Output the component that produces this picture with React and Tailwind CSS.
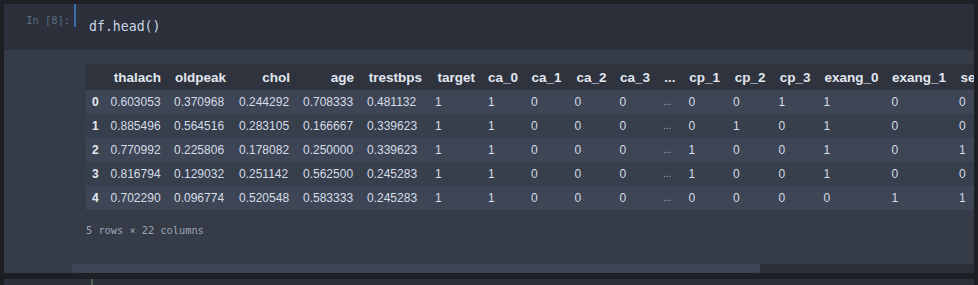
import React from 'react'

const columns = [
  { name: 'thalach', w: 'w-[63.5px] min-w-[63.5px]' },
  { name: 'oldpeak', w: 'w-[65px] min-w-[65px]' },
  { name: 'chol', w: 'w-[64px] min-w-[64px]' },
  { name: 'age', w: 'w-[64px] min-w-[64px]' },
  { name: 'trestbps', w: 'w-[68px] min-w-[68px]' },
  { name: 'target', w: 'w-[53px] min-w-[53px]' },
  { name: 'ca_0', w: 'w-[43px] min-w-[43px]' },
  { name: 'ca_1', w: 'w-[43.5px] min-w-[43.5px]' },
  { name: 'ca_2', w: 'w-[45px] min-w-[45px]' },
  { name: 'ca_3', w: 'w-[43.5px] min-w-[43.5px]' },
  { name: '...', w: 'w-[25.5px] min-w-[25.5px]', dots: true },
  { name: 'cp_1', w: 'w-[44.5px] min-w-[44.5px]' },
  { name: 'cp_2', w: 'w-[45.5px] min-w-[45.5px]' },
  { name: 'cp_3', w: 'w-[45px] min-w-[45px]' },
  { name: 'exang_0', w: 'w-[68px] min-w-[68px]' },
  { name: 'exang_1', w: 'w-[67.5px] min-w-[67.5px]' },
  { name: 'sex_0', w: 'w-[52px] min-w-[52px]' },
  { name: 'sex_1', w: 'w-[52px] min-w-[52px]' },
  { name: 'slope_0', w: 'w-[62px] min-w-[62px]' },
  { name: 'slope_1', w: 'w-[62px] min-w-[62px]' },
  { name: 'slope_2', w: 'w-[62px] min-w-[62px]' },
]

const rows = [
  ['0.603053', '0.370968', '0.244292', '0.708333', '0.481132', '1', '1', '0', '0', '0', '...', '0', '0', '1', '1', '0', '0', '1', '0', '0', '1'],
  ['0.885496', '0.564516', '0.283105', '0.166667', '0.339623', '1', '1', '0', '0', '0', '...', '0', '1', '0', '1', '0', '0', '1', '1', '0', '0'],
  ['0.770992', '0.225806', '0.178082', '0.250000', '0.339623', '1', '1', '0', '0', '0', '...', '1', '0', '0', '1', '0', '1', '0', '0', '0', '1'],
  ['0.816794', '0.129032', '0.251142', '0.562500', '0.245283', '1', '1', '0', '0', '0', '...', '1', '0', '0', '1', '0', '0', '1', '0', '0', '1'],
  ['0.702290', '0.096774', '0.520548', '0.583333', '0.245283', '1', '1', '0', '0', '0', '...', '0', '0', '0', '0', '1', '1', '0', '0', '1', '0'],
]

const mono = "font-['DejaVu_Sans_Mono',monospace]"

function DataFrame() {
  return (
    <table className="w-max border-collapse font-['Liberation_Sans',Arial,sans-serif]">
      <thead>
        <tr className="h-[26px] bg-[#2e333e]">
          <th className="w-[18px] min-w-[18px]" />
          {columns.map((col) => (
            <th
              key={col.name}
              className={`${col.w} px-[6.5px] text-right text-[13.5px] font-bold text-[#e1e7f0] leading-none pt-[1px]`}
            >
              {col.name}
            </th>
          ))}
        </tr>
      </thead>
      <tbody>
        {rows.map((row, i) => (
          <tr key={i} className={`h-[24px] ${i % 2 === 0 ? 'bg-[#3e4656]' : 'bg-[#373e4c]'}`}>
            <td className="pl-[6px] pr-0 text-left text-[12px] font-bold text-[#e4e9f1] leading-none">{i}</td>
            {row.map((v, j) => (
              <td
                key={j}
                className={`px-[6.5px] text-left leading-none ${
                  columns[j].dots ? 'text-[10px] text-[#a3adbd] align-bottom pb-[7px]' : 'text-[12px] text-[#d5dce7]'
                }`}
              >
                {v}
              </td>
            ))}
          </tr>
        ))}
      </tbody>
    </table>
  )
}

export default function App() {
  return (
    <div className="w-[978px] h-[285px] overflow-hidden bg-[#1e1f24] pt-[4px] px-[4px]">
      {/* input cell */}
      <div className="flex h-[46px] bg-[#2b303b]">
        <div className={`w-[70px] pr-[4px] pt-[9px] text-right text-[10.4px] leading-[14px] text-[#5d6c82] ${mono}`}>
          In [8]:
        </div>
        <div className="w-[2px] h-[23px] bg-[#3b6db3]" />
        <div className={`pl-[13px] pt-[14px] text-[13.2px] leading-[18px] text-[#c9d5e6] ${mono}`}>
          df.head()
        </div>
      </div>

      {/* output area */}
      <div className="flex h-[223px] bg-[#353b47]">
        <div className="w-[68px] shrink-0" />
        <div className="flex-1 min-w-0 overflow-hidden flex flex-col">
          <div className="pl-[14px] pt-[14px]">
            <DataFrame />
          </div>
          <div className={`pl-[14px] mt-[13px] text-[10.3px] leading-[14px] text-[#9ba6b7] ${mono}`}>
            5 rows × 22 columns
          </div>
          <div className="mt-auto h-[9px] flex bg-[#2a2f3a]">
            <div className="w-[688px] h-full bg-[#3d4454] rounded-[2px]" />
          </div>
        </div>
      </div>

      {/* next cell */}
      <div className="mt-[6px] flex h-[20px] bg-[#2b303b]">
        <div className="ml-[87px] w-[2px] h-full bg-[#566853]" />
      </div>
    </div>
  )
}
